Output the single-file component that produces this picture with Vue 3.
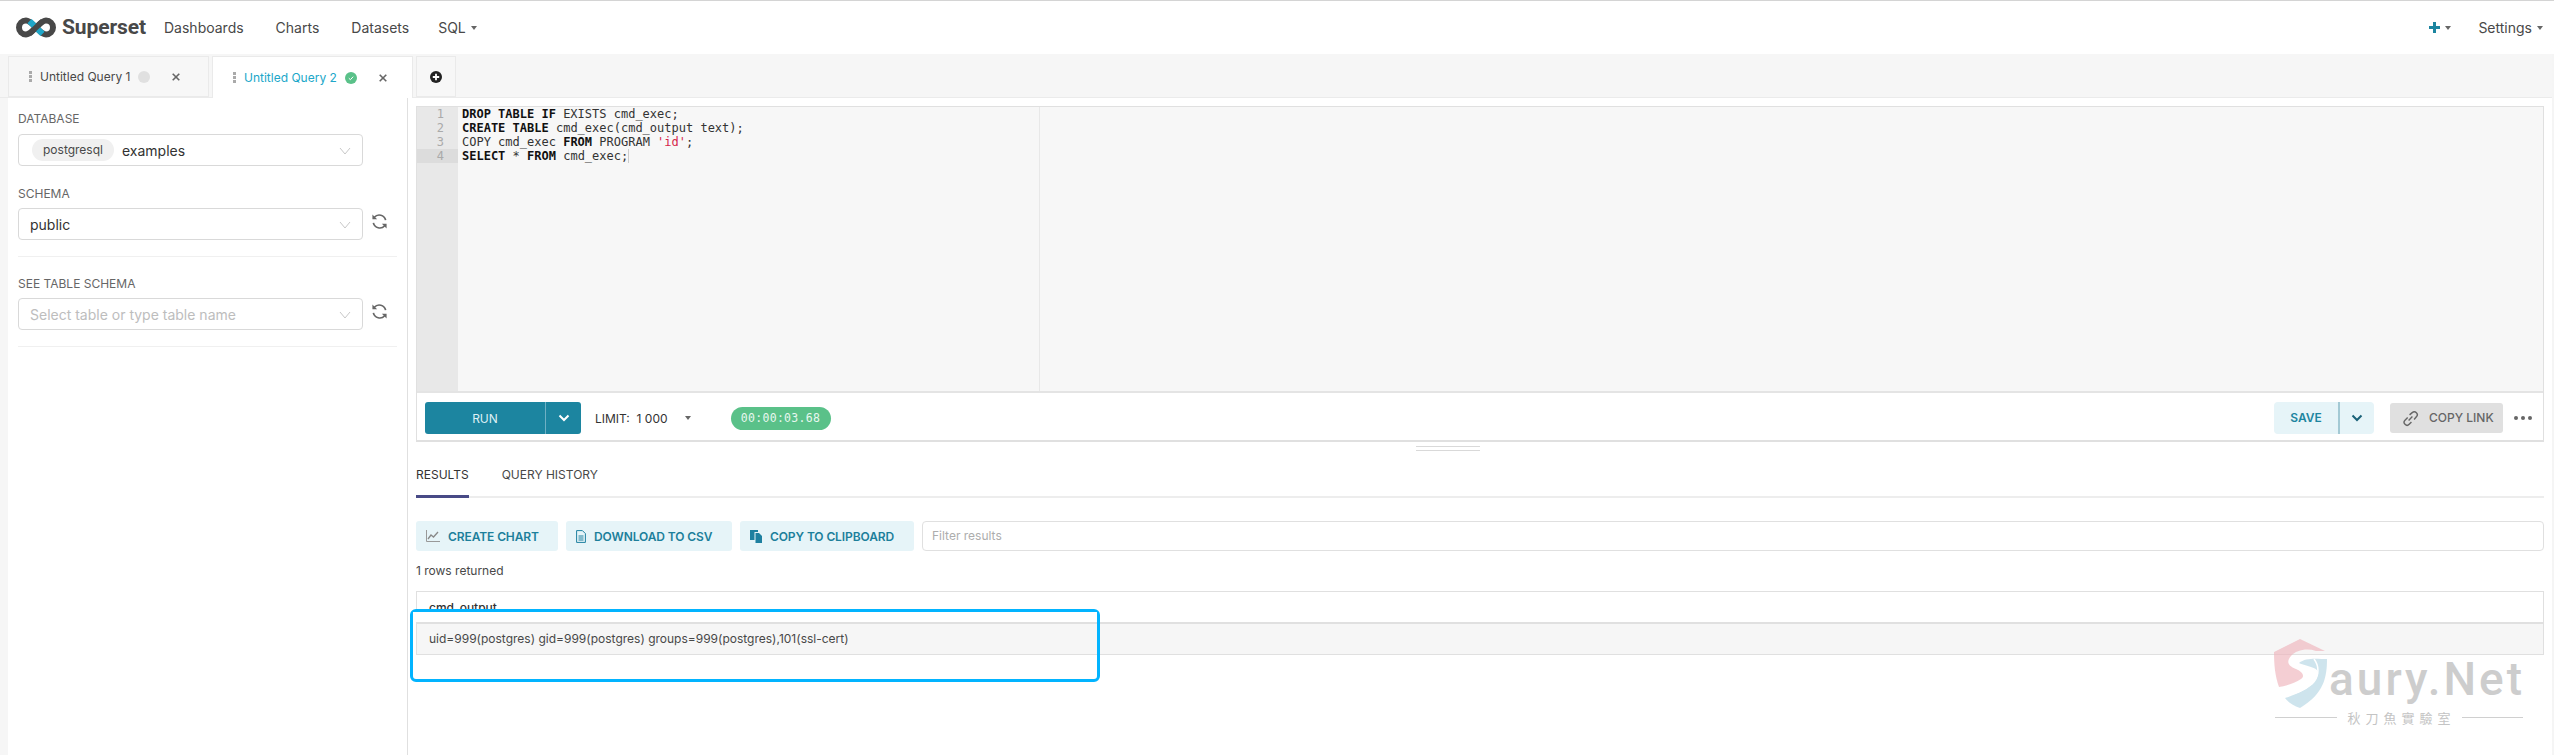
<script setup>
const gutter = [1, 2, 3, 4]
const actions = [
  { t: 'CREATE CHART', k: 'chart', w: 142 },
  { t: 'DOWNLOAD TO CSV', k: 'doc', w: 166 },
  { t: 'COPY TO CLIPBOARD', k: 'copy', w: 174 },
]
</script>

<template>
  <div class="page">
    <header class="nav">
      <div class="brand">
        <svg class="logo" viewBox="0 0 40 21" width="40" height="21">
          <path d="M10 3.500a7 7 0 1 0 0 14c3.500 0 6.500-3.500 10-7s6.500-7 10-7a7 7 0 1 1 0 14c-3.500 0-6.500-3.500-10-7s-6.500-7-10-7z" fill="none" stroke="#484848" stroke-width="6"/>
          <path d="M13.500 4.200L19.500 10M20.800 11.200L26.500 16.800" fill="none" stroke="#20a7c9" stroke-width="6"/>
          <path d="M13.500 16.800L26.500 4.200" fill="none" stroke="#484848" stroke-width="5.500"/>
        </svg>
        <span class="word">Superset</span>
      </div>
      <nav class="menu">
        <a>Dashboards</a><a>Charts</a><a>Datasets</a><a class="sql">SQL<i class="caret"></i></a>
      </nav>
      <div class="right">
        <svg viewBox="0 0 11 11" width="11" height="11"><path d="M5.500 0v11M0 5.500h11" stroke="#1c85a0" stroke-width="3"/></svg><i class="caret"></i>
        <a class="settings">Settings<i class="caret"></i></a>
      </div>
    </header>

    <div class="tabs">
      <div class="tab">
        <span class="dots"><i></i><i></i><i></i></span><span class="tname">Untitled Query 1</span><span class="dot grey"></span>
        <svg class="x" viewBox="0 0 8 8" width="8" height="8"><path d="M.7.7l6.600 6.600M7.300.7L.7 7.300" stroke="#666" stroke-width="1.600"/></svg>
      </div>
      <div class="tab active">
        <span class="dots"><i></i><i></i><i></i></span><span class="tname">Untitled Query 2</span>
        <span class="dot green"><svg viewBox="0 0 12 12" width="12" height="12"><path d="M3.800 6.200l1.600 1.500 2.800-3" fill="none" stroke="#fff" stroke-width="1"/></svg></span>
        <svg class="x" viewBox="0 0 8 8" width="8" height="8"><path d="M.7.7l6.600 6.600M7.300.7L.7 7.300" stroke="#666" stroke-width="1.600"/></svg>
      </div>
      <div class="tab add">
        <svg viewBox="0 0 12 12" width="12" height="12"><circle cx="6" cy="6" r="6" fill="#222"/><path d="M6 2.800v6.400M2.800 6h6.400" stroke="#fff" stroke-width="1.800"/></svg>
      </div>
    </div>

    <main class="body">
      <aside class="side">
        <div class="lab first">DATABASE</div>
        <div class="fieldrow">
          <div class="sel"><span class="pill">postgresql</span><span class="val">examples</span><svg class="chev" viewBox="0 0 12 8" width="12" height="8"><path d="M1 1l5 6 5-6" fill="none" stroke="#c8c8c8" stroke-width="1"/></svg></div>
        </div>
        <div class="lab">SCHEMA</div>
        <div class="fieldrow">
          <div class="sel"><span class="val nopad">public</span><svg class="chev" viewBox="0 0 12 8" width="12" height="8"><path d="M1 1l5 6 5-6" fill="none" stroke="#c8c8c8" stroke-width="1"/></svg></div>
          <svg class="ref" viewBox="0 0 18 18" width="17" height="17"><path d="M15.500 7.500A7 7 0 0 0 3.500 4.500M2.500 10.500A7 7 0 0 0 14.500 13.500" fill="none" stroke="#666" stroke-width="1.800"/><path d="M1.500 1.500v5h5zM16.500 16.500v-5h-5z" fill="#666"/></svg>
        </div>
        <div class="sep"></div>
        <div class="lab third">SEE TABLE SCHEMA</div>
        <div class="fieldrow">
          <div class="sel"><span class="val nopad ph">Select table or type table name</span><svg class="chev" viewBox="0 0 12 8" width="12" height="8"><path d="M1 1l5 6 5-6" fill="none" stroke="#c8c8c8" stroke-width="1"/></svg></div>
          <svg class="ref" viewBox="0 0 18 18" width="17" height="17"><path d="M15.500 7.500A7 7 0 0 0 3.500 4.500M2.500 10.500A7 7 0 0 0 14.500 13.500" fill="none" stroke="#666" stroke-width="1.800"/><path d="M1.500 1.500v5h5zM16.500 16.500v-5h-5z" fill="#666"/></svg>
        </div>
        <div class="sep"></div>
      </aside>

      <section class="work">
        <div class="panel">
          <div class="editor">
            <div class="gutter">
              <div v-for="n in gutter" :key="n" class="gl" :class="{ cur: n === 4 }">{{ n }}</div>
            </div>
            <div class="code">
              <div class="margin"></div>
              <div class="cl"><b>DROP TABLE IF</b> EXISTS cmd_exec;</div>
              <div class="cl"><b>CREATE TABLE</b> cmd_exec(cmd_output text);</div>
              <div class="cl">COPY cmd_exec <b>FROM</b> PROGRAM <span class="str">'id'</span>;</div>
              <div class="cl"><b>SELECT</b> * <b>FROM</b> cmd_exec;<i class="cursor"></i></div>
            </div>
          </div>
          <div class="bar">
            <div class="run"><span class="runl">RUN</span><span class="rund"><svg viewBox="0 0 12 8" width="12" height="8"><path d="M1.500 1.500L6 6l4.500-4.500" fill="none" stroke="#fff" stroke-width="2"/></svg></span></div>
            <div class="limit">LIMIT:&nbsp; 1 000<i class="caret lc"></i></div>
            <div class="timer">00:00:03.68</div>
            <div class="grow"></div>
            <div class="save"><span class="savel">SAVE</span><span class="saved"><svg viewBox="0 0 12 8" width="12" height="8"><path d="M1.500 1.500L6 6l4.500-4.500" fill="none" stroke="#1a6178" stroke-width="2"/></svg></span></div>
            <div class="copylink">
              <svg viewBox="0 0 18 18" width="17" height="17"><path d="M7 11l4-4M6 8l-2.800 2.800a3.100 3.100 0 0 0 4.400 4.400L10 12.800M8 5.200l2.800-2.400a3.100 3.100 0 0 1 4.400 4.400L12.800 10" fill="none" stroke="#666" stroke-width="1.500"/></svg>
              <span>COPY LINK</span>
            </div>
            <div class="more"><i></i><i></i><i></i></div>
          </div>
        </div>
        <div class="grip"><i></i><i></i></div>
        <div class="rtabs">
          <div class="rt on">RESULTS</div><div class="rt">QUERY HISTORY</div>
        </div>
        <div class="results">
          <div class="acts">
            <button v-for="a in actions" :key="a.t" class="act" :style="{ width: a.w + 'px' }">
              <svg v-if="a.k === 'chart'" viewBox="0 0 14 12" width="14" height="12"><path d="M.5 0v11.500H14" fill="none" stroke="#999" stroke-width="1"/><path d="M2 9l3-4 2.500 2L12 2" fill="none" stroke="#888" stroke-width="1.300"/></svg>
              <svg v-else-if="a.k === 'doc'" viewBox="0 0 10 13" width="10" height="13"><path d="M.6.6h5.800l3 3v8.800H.6zM2.500 6h5M2.500 8h5M2.500 10h5" fill="none" stroke="#1e80a0" stroke-width="1"/></svg>
              <svg v-else viewBox="0 0 12 13" width="12" height="13"><path d="M0 0h8v2H4.500v8H0z" fill="#1e80a0"/><path d="M5.500 3H9l3 3v7H5.500z" fill="#1e80a0"/></svg>
              <span>{{ a.t }}</span>
            </button>
            <div class="filter">Filter results</div>
          </div>
          <div class="count">1 rows returned</div>
          <div class="table">
            <div class="th">cmd_output</div>
            <div class="td">uid=999(postgres) gid=999(postgres) groups=999(postgres),101(ssl-cert)</div>
          </div>
        </div>
      </section>
    </main>

    <div class="highlight"></div>

    <div class="mark">
      <svg class="shield" viewBox="0 0 54 70" width="54" height="70">
        <path d="M26 0L51 12H42C33 9 22 11 17 17 12 23 14 27 22 30 29 33 31 37 27 40 21 44 12 47 5 48 1 37 0 25 0 13z" fill="#eeb4bc" opacity=".65"/>
        <path d="M25 24C32 18 44 20 53 20 53 38 50 55 26 69 20 67 15 64 11 59 24 55 40 48 44 36 46 28 34 28 25 24z" fill="#b4d6e3" opacity=".65"/>
        <path d="M40 20C46 28 45 38 38 45 32 50 22 55 10 57" fill="none" stroke="#fff" stroke-width="1.500"/>
      </svg>
      <div class="mtext">aury.Net</div>
      <div class="msub"><i></i><span>秋刀魚實驗室</span><i></i></div>
    </div>
    <div class="scroll"></div>
  </div>
</template>

<style>
html, body { margin: 0; background: #fff; }
</style>
<style scoped>
.page { position: relative; width: 2554px; height: 755px; overflow: hidden; background: #fff; font-family: Inter, "Liberation Sans", sans-serif; color: #484848; font-size: 14px; box-sizing: border-box; border-top: 1px solid #d4d4d4; display: flex; flex-direction: column; }
.nav { height: 53px; flex: none; display: flex; align-items: center; box-sizing: border-box; padding: 0 11px 0 16px; background: #fff; }
.brand { display: flex; align-items: center; width: 148px; }
.logo { display: block; margin-top: -1px; }
.word { font-family: Roboto, Inter, sans-serif; font-weight: 700; font-size: 21px; color: #484848; margin-left: 6px; letter-spacing: -.1px; margin-top: -1px; }
.menu { display: flex; gap: 32px; font-size: 14px; color: #484848; }
.menu a { display: flex; align-items: center; }
.menu a.sql { margin-left: -3px; }
.caret { display: inline-block; width: 0; height: 0; border-left: 3px solid transparent; border-right: 3px solid transparent; border-top: 4px solid #666; margin-left: 5px; }
.right { margin-left: auto; display: flex; align-items: center; }
.settings { margin-left: 27px; display: flex; align-items: center; }
.tabs { height: 44px; flex: none; background: #f6f6f6; display: flex; align-items: flex-start; padding: 2px 0 0 8px; box-sizing: border-box; gap: 3px; border-bottom: 1px solid #ebebeb; }
.tab { height: 41px; width: 201px; flex: none; box-sizing: border-box; display: flex; align-items: center; background: #f7f7f7; border: 1px solid #eaeaea; font-size: 12px; padding-left: 20px; color: #484848; }
.tab.active { background: #fff; border-bottom: 0; height: 42px; position: relative; z-index: 1; }
.tab.active .tname { color: #20a7c9; }
.tab.add { width: 40px; padding: 0; justify-content: center; }
.dots { width: 11px; flex: none; display: flex; flex-direction: column; gap: 1.500px; }
.dots i { display: block; width: 3px; height: 2.500px; background: #aaa; }
.tname { white-space: nowrap; }
.dot { width: 12px; height: 12px; border-radius: 50%; margin-left: 8px; display: block; flex: none; }
.grey { background: #e0e0e0; }
.green { background: #5ac189; }
.dot svg { display: block; }
.x { margin-left: 22px; flex: none; }
.body { display: flex; flex: 1; min-height: 0; background: #f6f6f6; }
.side { width: 400px; margin-left: 8px; box-sizing: border-box; background: #fff; border-right: 1px solid #e0e0e0; padding: 0 10px; flex: none; }
.lab { font-size: 12px; color: #666; height: 14px; line-height: 14px; margin-top: 21px; margin-bottom: 7px; }
.lab.first { margin-top: 14px; margin-bottom: 8px; }
.lab.third { margin-top: 20px; }
.fieldrow { display: flex; align-items: center; gap: 8px; }
.sel { width: 345px; height: 32px; flex: none; box-sizing: border-box; border: 1px solid #d9d9d9; border-radius: 4px; background: #fff; display: flex; align-items: center; padding-left: 13px; position: relative; }
.pill { background: #f0f0f0; height: 22px; line-height: 22px; border-radius: 11px; padding: 0 11px; font-size: 12px; color: #484848; }
.val { font-size: 14px; color: #323232; margin-left: 8px; }
.val.nopad { margin-left: -2px; }
.val.ph { color: #bdbdbd; }
.chev { position: absolute; right: 11px; top: 12px; }
.ref { margin-top: -6px; }
.sep { height: 1px; background: #f0f0f0; margin-top: 16px; }
.work { flex: 1; min-width: 0; padding: 0 10px 0 8px; background: #fff; display: flex; flex-direction: column; }
.panel { margin-top: 8px; border: 1px solid #e0e0e0; border-bottom-width: 2px; background: #fff; box-sizing: border-box; height: 336px; flex: none; display: flex; flex-direction: column; }
.editor { height: 286px; flex: none; box-sizing: border-box; display: flex; background: #f7f7f7; border-bottom: 2px solid #e4e4e4; font-family: "DejaVu Sans Mono", monospace; font-size: 12px; line-height: 14px; color: #333; }
.gutter { width: 41px; background: #e8e8e8; color: #aaa; }
.gl { padding-right: 14px; text-align: right; height: 14px; }
.gl.cur { background: #dcdcdc; }
.code { flex: 1; padding-left: 4px; position: relative; white-space: pre; }
.cl { height: 14px; }
.cl b { color: #111; }
.str { color: #d6264a; }
.cursor { display: inline-block; width: 1px; height: 14px; background: #ccc; vertical-align: top; }
.margin { position: absolute; left: 581px; top: 0; bottom: 0; width: 1px; background: #e8e8e8; }
.bar { flex: 1; display: flex; align-items: center; padding: 3px 8px 0; }
.run { width: 156px; height: 32px; background: #1c85a0; border-radius: 3px; display: flex; color: #fff; }
.runl { width: 120px; text-align: center; line-height: 33px; font-size: 12px; color: #dff0f5; border-right: 1px solid #6fb0c4; }
.rund { flex: 1; display: flex; align-items: center; justify-content: center; }
.limit { margin-left: 14px; font-size: 12px; color: #333; display: flex; align-items: center; }
.lc { margin-left: 17px; }
.timer { margin-left: 40px; width: 100px; height: 23px; border-radius: 12px; background: #5ac189; color: #e8f7ef; font-family: "DejaVu Sans Mono", monospace; font-size: 11.500px; line-height: 22px; text-align: center; letter-spacing: .3px; }
.grow { flex: 1; }
.save { width: 100px; height: 32px; background: #e6f4f8; border-radius: 4px; display: flex; align-items: center; font-size: 12px; font-weight: 600; color: #1c85a0; }
.savel { width: 64px; text-align: center; line-height: 32px; border-right: 2px solid #a3c9d4; }
.saved { flex: 1; display: flex; align-items: center; justify-content: center; }
.copylink { margin-left: 16px; width: 113px; height: 30px; box-sizing: border-box; padding: 0 0 0 12px; background: #e0e0e0; border-radius: 3px; display: flex; align-items: center; gap: 10px; font-size: 12px; font-weight: 500; color: #666; }
.copylink span { margin-top: -2px; }
.more { margin-left: 11px; display: flex; gap: 3px; margin-right: 3px; margin-top: -1px; }
.more i { width: 4px; height: 4px; border-radius: 50%; background: #666; display: block; }
.grip { height: 5px; flex: none; margin: 4px 0 0 1000px; width: 64px; display: flex; flex-direction: column; gap: 3px; }
.grip i { display: block; height: 1px; background: #d9d9d9; }
.rtabs { display: flex; gap: 33px; height: 47px; flex: none; border-bottom: 2px solid #ededed; box-sizing: border-box; font-size: 12px; color: #484848; align-items: flex-start; }
.rt { line-height: 48px; height: 47px; box-sizing: border-box; }
.rt.on { color: #333; border-bottom: 3px solid #484a86; }
.results { padding-top: 23px; }
.acts { display: flex; gap: 8px; }
.act { height: 30px; flex: none; box-sizing: border-box; border: 0; border-radius: 3px; background: #e6f4f8; color: #1c7f9b; font-family: Inter, sans-serif; font-weight: 600; font-size: 12px; display: flex; align-items: center; justify-content: flex-start; gap: 8px; padding: 0 0 0 10px; white-space: nowrap; letter-spacing: -.1px; }
.filter { flex: 1; height: 30px; box-sizing: border-box; border: 1px solid #e0e0e0; border-radius: 4px; color: #adadad; font-size: 12px; line-height: 28px; padding-left: 9px; }
.count { font-size: 12px; color: #484848; line-height: 14px; margin-top: 13px; }
.table { margin-top: 13px; border: 1px solid #e0e0e0; }
.th { height: 32px; box-sizing: border-box; padding: 9px 0 0 12px; font-size: 12px; line-height: 14px; font-weight: 500; color: #323232; border-bottom: 2px solid #e0e0e0; }
.td { height: 30px; background: #f6f6f6; font-size: 12px; line-height: 30px; padding-left: 12px; color: #484848; }
.highlight { position: absolute; left: 410px; top: 608px; width: 690px; height: 73px; box-sizing: border-box; border: 3px solid #02b4ff; border-radius: 6px; }
.highlight::before { content: ""; position: absolute; left: 0; right: 0; top: 0; height: 10px; background: #fff; }
.mark { position: absolute; left: 2274px; top: 638px; width: 250px; height: 90px; }
.shield { position: absolute; left: 0; top: 0; }
.mtext { position: absolute; left: 55px; top: 13px; font-family: Roboto, "Liberation Sans", sans-serif; font-size: 46px; line-height: 54px; color: #cdcdcd; font-weight: 500; letter-spacing: 3px; white-space: nowrap; }
.msub { position: absolute; left: 1px; top: 69px; width: 248px; display: flex; align-items: center; gap: 11px; }
.msub i { flex: 1; height: 1px; background: #d0d0d0; }
.msub span { font-family: "Noto Sans CJK TC", sans-serif; font-size: 13px; letter-spacing: 5px; margin-right: -5px; color: #c4c4c4; white-space: nowrap; }
.scroll { position: absolute; right: 0; top: 53px; bottom: 0; width: 2px; background: #f5f5f5; }
</style>
